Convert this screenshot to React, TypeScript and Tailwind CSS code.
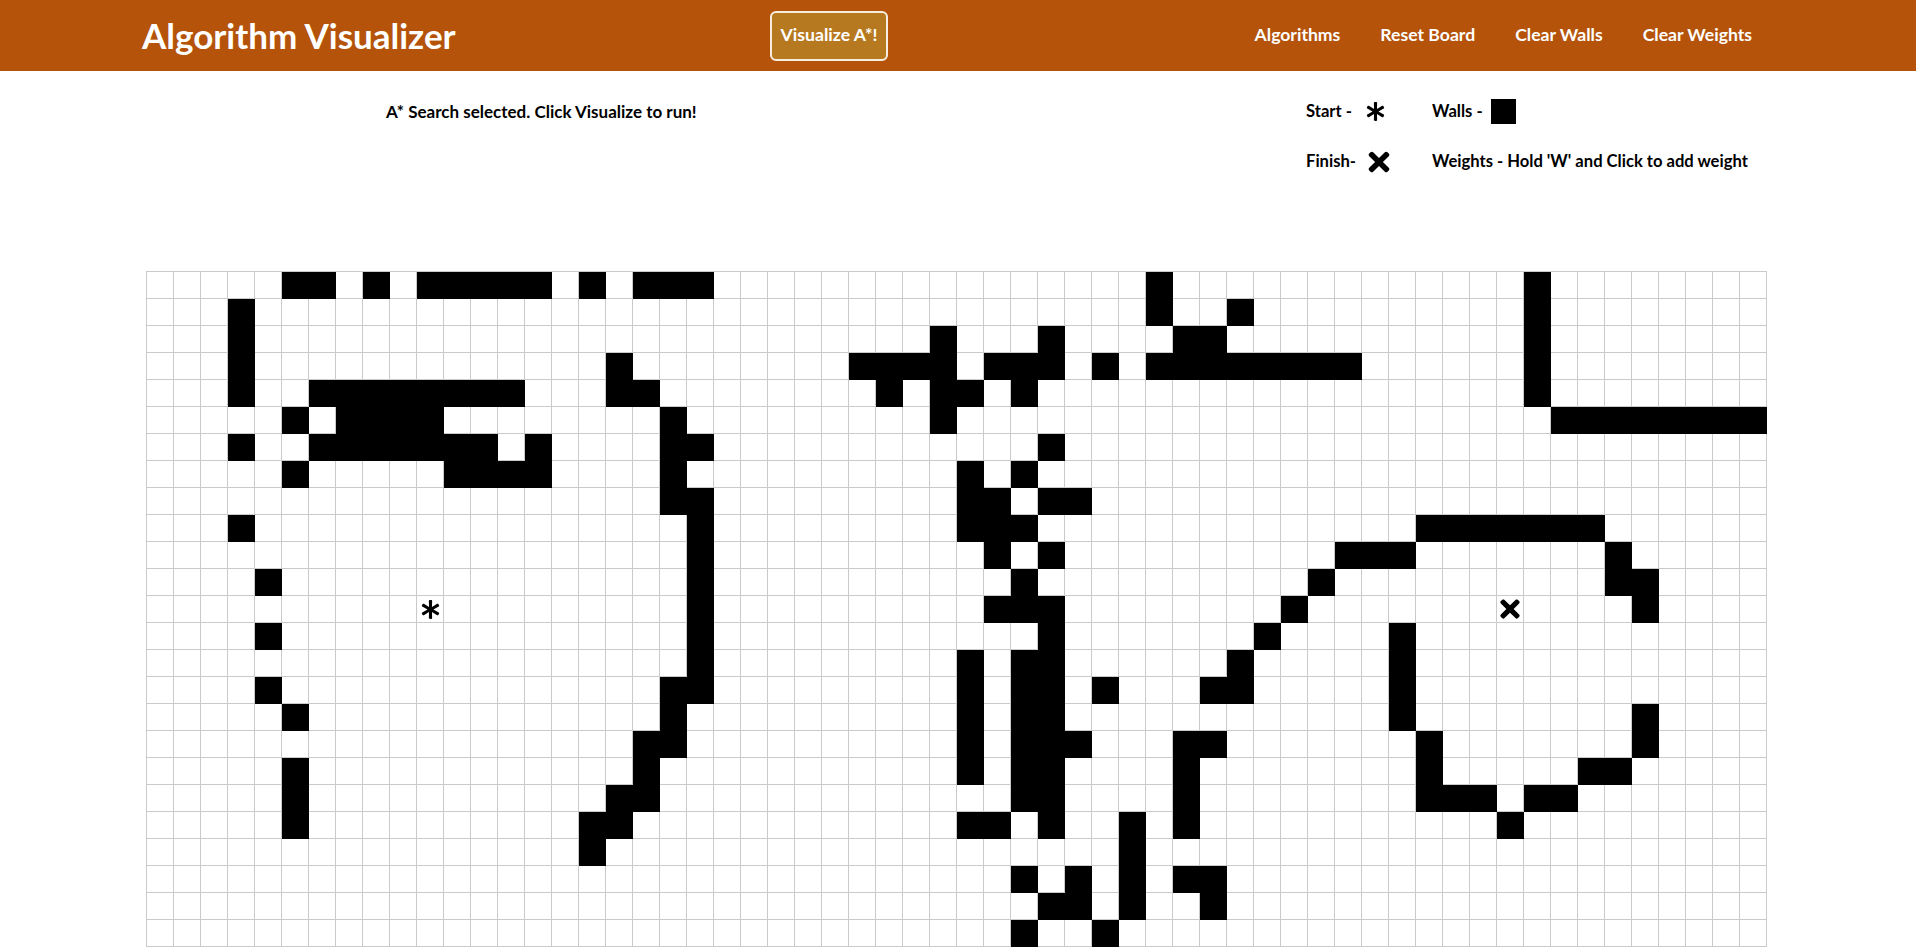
import React from "react";
import { FaAsterisk, FaTimes } from "react-icons/fa";

// wall layout, one entry per row, columns as "a-b" ranges
const WALL_ROWS = [
  "5-6,8,10-14,16,18-20,37,51",
  "3,37,40,51",
  "3,29,33,38-39,51",
  "3,17,26-29,31-33,35,37-44,51",
  "3,6-13,17-18,27,29-30,32,51",
  "5,7-10,19,29,52-59",
  "3,6-12,14,19-20,33",
  "5,11-14,19,30,32",
  "19-20,30-31,33-34",
  "3,20,30-32,47-53",
  "20,31,33,44-46,54",
  "4,20,32,43,54-55",
  "20,31-33,42,55",
  "4,20,33,41,46",
  "20,30,32-33,40,46",
  "4,19-20,30,32-33,35,39-40,46",
  "5,19,30,32-33,46,55",
  "18-19,30,32-34,38-39,47,55",
  "5,18,30,32-33,38,47,53-54",
  "5,17-18,32-33,38,47-49,51-52",
  "5,16-17,30-31,33,36,38,50",
  "16,36",
  "32,34,36,38-39",
  "33-34,36,39",
  "32,35",
];

const COLS = 60;
const START = { row: 12, col: 10 };
const FINISH = { row: 12, col: 50 };

const parseRow = (spec: string) => {
  const set = new Set<number>();
  spec.split(",").forEach((part) => {
    const [a, b] = part.split("-").map(Number);
    for (let c = a; c <= (b ?? a); c++) set.add(c);
  });
  return set;
};

const Node = ({ wall, start, finish }: { wall: boolean; start: boolean; finish: boolean }) => {
  return (
    <div
      className={
        wall
          ? "w-[27px] h-[27px] border-r border-b border-black bg-black"
          : "w-[27px] h-[27px] border-r border-b border-[#cacaca] bg-white flex items-center justify-center overflow-visible"
      }
    >
      {start && <FaAsterisk className="w-[19px] h-[19px] shrink-0 text-black" />}
      {finish && <FaTimes className="w-[28px] h-[28px] shrink-0 text-black" />}
    </div>
  );
};

const Grid = () => {
  const rows = WALL_ROWS.map(parseRow);
  return (
    <div className="pl-[146px]">
      <div className="inline-grid grid-cols-[repeat(60,27px)] border-l border-t border-[#cacaca]">
        {rows.map((walls, r) =>
          Array.from({ length: COLS }, (_, c) => (
            <Node
              key={`${r}-${c}`}
              wall={walls.has(c)}
              start={r === START.row && c === START.col}
              finish={r === FINISH.row && c === FINISH.col}
            />
          ))
        )}
      </div>
    </div>
  );
};

const Header = () => {
  const links = ["Algorithms", "Reset Board", "Clear Walls", "Clear Weights"];
  return (
    <header className="h-[71px] bg-[#b45309] flex items-center pl-[142px] pr-[144px] text-white">
      <div className="w-[628px]">
        <h1 className="text-[35px] font-bold leading-none">Algorithm Visualizer</h1>
      </div>
      <button className="h-[50px] w-[118px] rounded-[6px] border-2 border-[#f6efe1] bg-[#b7791f] text-[17.6px] font-bold text-white">
        Visualize A*!
      </button>
      <nav className="ml-auto flex">
        {links.map((l) => (
          <a key={l} className="px-5 text-[17.6px] font-bold cursor-pointer">
            {l}
          </a>
        ))}
      </nav>
    </header>
  );
};

const Info = () => {
  return (
    <div className="h-[200px] flex items-start pt-[28px] pl-[386px] pr-[166px] text-[16.6px] font-bold text-black">
      <p className="h-[25px] leading-[25px] text-[17px]">A* Search selected. Click Visualize to run!</p>
      <div className="ml-auto grid grid-cols-[126px_auto] content-start gap-y-[25px] w-[444px]">
        <div className="h-[25px] flex items-center">
          <span className="w-[60px]">Start -</span>
          <FaAsterisk className="w-[19px] h-[19px] shrink-0" />
        </div>
        <div className="h-[25px] flex items-center">
          <span className="w-[59px]">Walls -</span>
          <span className="w-[25px] h-[25px] bg-black" />
        </div>
        <div className="h-[25px] flex items-center">
          <span className="w-[58px]">Finish-</span>
          <FaTimes className="w-[30px] h-[30px] shrink-0" />
        </div>
        <div className="h-[25px] flex items-center">
          <span>Weights - Hold 'W' and Click to add weight</span>
        </div>
      </div>
    </div>
  );
};

export default function App() {
  return (
    <div className="min-h-screen bg-white font-['Lato','Open_Sans',sans-serif]">
      <Header />
      <Info />
      <Grid />
    </div>
  );
}
